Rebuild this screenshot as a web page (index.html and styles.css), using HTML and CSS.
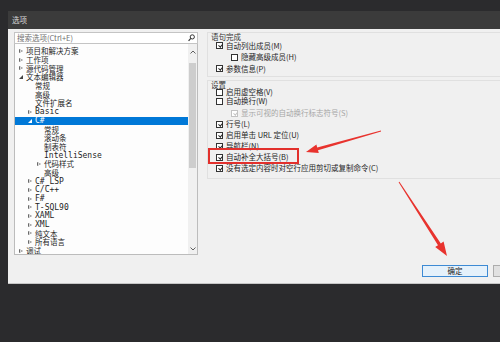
FILE: index.html
```html
<!DOCTYPE html>
<html lang="zh-CN">
<head>
  <meta charset="UTF-8">
  <meta name="viewport" content="width=device-width, initial-scale=1.0">
  <title>选项</title>
  <link rel="stylesheet" href="styles.css">
</head>
<body>
  <div class="screen">
    <div class="dialog">
      <div class="titlebar">选项</div>

      <div class="body">
        <div class="main">
          <!-- left: search + tree -->
          <div class="left">
            <div class="search">
              <span class="search-text">搜索选项(Ctrl+E)</span>
              <svg class="search-icon" width="7" height="8" viewBox="0 0 7 8">
                <circle cx="4.3" cy="2.9" r="2.1" fill="none" stroke="#333" stroke-width="1"/>
                <path d="M2.8 4.4 L0.6 6.8" stroke="#333" stroke-width="1.2"/>
              </svg>
            </div>
            <div class="tree">
              <div class="tree-list">
                <div class="row l0"><span class="tg closed"></span><span class="txt">项目和解决方案</span></div>
                <div class="row l0"><span class="tg closed"></span><span class="txt">工作项</span></div>
                <div class="row l0"><span class="tg closed"></span><span class="txt">源代码管理</span></div>
                <div class="row l0"><span class="tg open"></span><span class="txt">文本编辑器</span></div>
                <div class="row l1"><span class="tg"></span><span class="txt">常规</span></div>
                <div class="row l1"><span class="tg"></span><span class="txt">高级</span></div>
                <div class="row l1"><span class="tg"></span><span class="txt">文件扩展名</span></div>
                <div class="row l1"><span class="tg closed"></span><span class="txt mono">Basic</span></div>
                <div class="row l1 selected"><span class="tg open"></span><span class="txt mono">C#</span></div>
                <div class="row l2"><span class="tg"></span><span class="txt">常规</span></div>
                <div class="row l2"><span class="tg"></span><span class="txt">滚动条</span></div>
                <div class="row l2"><span class="tg"></span><span class="txt">制表符</span></div>
                <div class="row l2"><span class="tg"></span><span class="txt mono">IntelliSense</span></div>
                <div class="row l2"><span class="tg closed"></span><span class="txt">代码样式</span></div>
                <div class="row l2"><span class="tg"></span><span class="txt">高级</span></div>
                <div class="row l1"><span class="tg closed"></span><span class="txt mono">C#_LSP</span></div>
                <div class="row l1"><span class="tg closed"></span><span class="txt mono">C/C++</span></div>
                <div class="row l1"><span class="tg closed"></span><span class="txt mono">F#</span></div>
                <div class="row l1"><span class="tg closed"></span><span class="txt mono">T-SQL90</span></div>
                <div class="row l1"><span class="tg closed"></span><span class="txt mono">XAML</span></div>
                <div class="row l1"><span class="tg closed"></span><span class="txt mono">XML</span></div>
                <div class="row l1"><span class="tg closed"></span><span class="txt">纯文本</span></div>
                <div class="row l1"><span class="tg closed"></span><span class="txt">所有语言</span></div>
                <div class="row l0"><span class="tg closed"></span><span class="txt">调试</span></div>
              </div>
              <div class="scrollbar">
                <svg class="sb-arrow" width="6" height="4" viewBox="0 0 6 4"><path d="M0.5 3.5 L3 1 L5.5 3.5" fill="none" stroke="#606060" stroke-width="1"/></svg>
                <div class="sb-thumb"></div>
                <div class="sb-space"></div>
                <svg class="sb-arrow" width="6" height="4" viewBox="0 0 6 4"><path d="M0.5 0.5 L3 3 L5.5 0.5" fill="none" stroke="#606060" stroke-width="1"/></svg>
              </div>
            </div>
          </div>

          <!-- right: options -->
          <div class="right">
            <div class="group first">
              <div class="group-title">语句完成</div>
              <div class="opt"><span class="cb on"></span>自动列出成员(M)</div>
              <div class="opt sub"><span class="cb"></span>隐藏高级成员(H)</div>
              <div class="opt"><span class="cb on"></span>参数信息(P)</div>
            </div>
            <div class="group second">
              <div class="group-title">设置</div>
              <div class="opt tight"><span class="cb"></span>启用虚空格(V)</div>
              <div class="opt tight"><span class="cb"></span>自动换行(W)</div>
              <div class="opt sub disabled spaced"><span class="cb on"></span>显示可视的自动换行标志符号(S)</div>
              <div class="opt"><span class="cb on"></span>行号(L)</div>
              <div class="opt"><span class="cb on"></span>启用单击 URL 定位(U)</div>
              <div class="opt"><span class="cb on"></span>导航栏(N)</div>
              <div class="opt"><span class="cb on"></span>自动补全大括号(B)</div>
              <div class="opt"><span class="cb on"></span>没有选定内容时对空行应用剪切或复制命令(C)</div>
            </div>
          </div>
        </div>

        <div class="footer">
          <button class="btn primary">确定</button>
          <button class="btn">取消</button>
        </div>
      </div>
    </div>

    <!-- red annotations drawn on top of the screenshot -->
    <svg class="marks" width="500" height="342" viewBox="0 0 500 342">
      <rect x="209" y="149" width="89" height="14" fill="none" stroke="#e2302c" stroke-width="2"/>
      <polygon fill="#e8332e" points="306,152 316.4,144.5 317.2,147.4 380.9,130.5 381.1,131.5 318,150.2 318.8,153.1"/>
      <polygon fill="#e8332e" points="447,256 443.6,241.6 440.8,243.4 399.4,181.7 398.6,182.3 438,245.2 435.2,247"/>
    </svg>
  </div>
</body>
</html>
```

FILE: styles.css
```css
* {
  box-sizing: border-box;
}

body {
  margin: 0;
  background-color: #2b2b2d;
  font-family: "Noto Sans CJK SC", "Noto Sans", sans-serif;
  font-size: 7.5px;
  line-height: 8px;
  color: #1e1e1e;
}

.screen {
  position: relative;
  width: 500px;
  height: 342px;
  overflow: hidden;
  padding: 11px 0 0 8px;
}

.dialog {
  width: 560px;
}

.titlebar {
  height: 18px;
  background-color: #3b3b3b;
  color: #d8d8d8;
  padding-left: 4px;
  display: flex;
  align-items: center;
}

.body {
  height: 255px;
  background-color: #f0f0f0;
  padding: 3px 9px 0 6px;
  display: flex;
  flex-direction: column;
  border-bottom: 1px solid #c6c6c6;
}

.main {
  display: flex;
  height: 223px;
}

/* left column */
.left {
  width: 184px;
  display: flex;
  flex-direction: column;
}

.search {
  height: 12px;
  border: 1px solid #c4c4c4;
  background-color: #fff;
  display: flex;
  align-items: center;
  justify-content: space-between;
  padding: 0 2px 0 2px;
  color: #707070;
}

.tree {
  flex: 1;
  display: flex;
  border: 1px solid #bcbcbc;
  border-top: none;
  background-color: #fdfdfd;
  overflow: hidden;
}

.tree-list {
  flex: 1;
  padding-top: 3px;
}

.row {
  height: 8.7px;
  line-height: 8px;
  display: flex;
  align-items: center;
  white-space: nowrap;
}

.row.l0 { padding-left: 4px; }
.row.l1 { padding-left: 13px; }
.row.l2 { padding-left: 22px; }

.row.selected {
  background-color: #0078d7;
  color: #fff;
}

.tg {
  width: 7px;
  height: 6px;
  flex-shrink: 0;
  position: relative;
}

.tg.closed::before {
  content: "";
  position: absolute;
  left: 0;
  top: 0.5px;
  border-left: 4px solid #6a6a6a;
  border-top: 2.5px solid transparent;
  border-bottom: 2.5px solid transparent;
}

.tg.closed::after {
  content: "";
  position: absolute;
  left: 1px;
  top: 1.7px;
  border-left: 2px solid #fdfdfd;
  border-top: 1.3px solid transparent;
  border-bottom: 1.3px solid transparent;
}

.tg.open::before {
  content: "";
  position: absolute;
  left: 0;
  top: 1px;
  border-right: 4px solid #444;
  border-top: 4px solid transparent;
}

.row.selected .tg.open::before {
  border-right-color: #fff;
}

.txt.mono {
  font-family: "DejaVu Sans Mono", monospace;
  font-size: 8px;
  font-weight: 500;
}

.scrollbar {
  width: 9px;
  background-color: #f0f0f0;
  display: flex;
  flex-direction: column;
  align-items: center;
  padding: 6px 0 3px;
}

.sb-thumb {
  width: 7px;
  height: 105px;
  margin-top: 9px;
  background-color: #cdcdcd;
}

.sb-space {
  flex: 1;
}

/* right column */
.right {
  flex: 1;
  margin-left: 9px;
}

.group {
  border: 1px solid #e0e0e0;
  border-right: none;
}

.group.first {
  padding-bottom: 1px;
}

.group.second {
  margin-top: 3px;
  padding-bottom: 4px;
}

.group-title {
  height: 7px;
  line-height: 7px;
  padding-left: 3px;
  color: #333;
}

.opt {
  height: 11px;
  display: flex;
  align-items: center;
  padding-left: 8px;
  white-space: nowrap;
}

.group.first .opt {
  height: 11.5px;
}

.opt.tight {
  height: 9px;
}

.opt.spaced {
  margin-top: 2px;
}

.opt.sub {
  padding-left: 23px;
}

.opt.disabled {
  color: #a6a6a6;
}

.cb {
  width: 7px;
  height: 7px;
  border: 1px solid #333;
  background-color: #fff;
  margin-right: 3px;
  flex-shrink: 0;
  position: relative;
}

.cb.on::after {
  content: "";
  position: absolute;
  left: 1.6px;
  top: 0;
  width: 1.6px;
  height: 3.4px;
  border-right: 1px solid #222;
  border-bottom: 1px solid #222;
  transform: rotate(40deg);
}

.opt.disabled .cb {
  border-color: #c2c2c2;
}

.opt.disabled .cb.on::after {
  border-color: #c2c2c2;
}

/* footer buttons */
.footer {
  display: flex;
  justify-content: flex-end;
  gap: 5px;
  margin-top: 10px;
}

.btn {
  width: 66px;
  height: 12px;
  padding: 0;
  font-family: inherit;
  font-size: 7.5px;
  color: #1e1e1e;
  background-color: #e1e1e1;
  border: 1px solid #adadad;
  line-height: 10px;
}

.btn.primary {
  background-color: #e5f1fb;
  border-color: #3d8ad4;
}

.marks {
  position: absolute;
  left: 0;
  top: 0;
  pointer-events: none;
}
```
